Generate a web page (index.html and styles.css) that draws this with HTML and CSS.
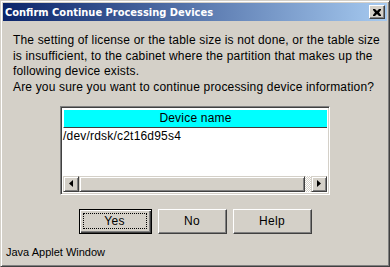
FILE: index.html
```html
<!DOCTYPE html>
<html>
<head>
<meta charset="utf-8">
<link rel="stylesheet" href="styles.css">
</head>
<body>
<div class="window">
  <div class="titlebar">
    <span class="title">Confirm Continue Processing Devices</span>
    <div class="close"><svg width="8" height="7" viewBox="0 0 8 7"><path d="M0 0h2l2 2 2-2h2v1l-2 2.5 2 2.5v1h-2l-2-2-2 2h-2v-1l2-2.5-2-2.5z" fill="#000"/></svg></div>
  </div>
  <div class="content">
    <p class="message">The setting of license or the table size is not done, or the table size<br>is insufficient, to the cabinet where the partition that makes up the<br>following device exists.<br>Are you sure you want to continue processing device information?</p>
    <div class="table">
      <div class="thead">Device name</div>
      <div class="tbody">
        <div class="row">/dev/rdsk/c2t16d95s4</div>
      </div>
      <div class="hscroll">
        <div class="sbtn"><svg width="4" height="7" viewBox="0 0 4 7"><path d="M4 0v7L0 3.5z" fill="#000"/></svg></div>
        <div class="thumb"></div>
        <div class="track"></div>
        <div class="sbtn"><svg width="4" height="7" viewBox="0 0 4 7"><path d="M0 0v7l4-3.5z" fill="#000"/></svg></div>
      </div>
    </div>
    <div class="buttons">
      <div class="btn default"><span class="focus">Yes</span></div>
      <div class="btn no">No</div>
      <div class="btn help">Help</div>
    </div>
  </div>
  <div class="status">Java Applet Window</div>
</div>
</body>
</html>
```
FILE: styles.css
```css
html, body {
  margin: 0;
  padding: 0;
  background: #d4d0c8;
}
body {
  width: 390px;
  height: 267px;
  overflow: hidden;
  font-family: "Liberation Sans", Arial, sans-serif;
  font-size: 12px;
  color: #000;
}
.window {
  box-sizing: border-box;
  width: 390px;
  height: 267px;
  border: 1px solid;
  border-color: #d4d0c8 #404040 #404040 #d4d0c8;
  box-shadow: inset 1px 1px 0 #fff, inset -1px -1px 0 #808080;
  padding: 2px;
  display: flex;
  flex-direction: column;
}
.titlebar {
  height: 18px;
  display: flex;
  align-items: center;
  justify-content: space-between;
  background: linear-gradient(to right, #0a246a, #a6caf0);
  padding: 0 2px 0 2px;
}
.title {
  color: #fff;
  font-weight: bold;
  font-size: 11px;
  font-family: "DejaVu Sans Condensed", "DejaVu Sans", Tahoma, sans-serif;
  font-stretch: condensed;
}
.close {
  box-sizing: border-box;
  width: 16px;
  height: 14px;
  background: #d4d0c8;
  border: 1px solid;
  border-color: #fff #404040 #404040 #fff;
  box-shadow: inset -1px -1px 0 #808080;
  display: flex;
  align-items: center;
  justify-content: center;
}
.content {
  flex: 1;
  display: flex;
  flex-direction: column;
}
.message {
  margin: 12px 0 0 10px;
  white-space: nowrap;
  line-height: 15.7px;
  letter-spacing: 0.17px;
}
.table {
  box-sizing: border-box;
  margin: 10px 0 0 57px;
  width: 270px;
  height: 89px;
  border: 1px solid;
  border-color: #808080 #fff #fff #808080;
  box-shadow: inset 1px 1px 0 #404040, inset -1px -1px 0 #d4d0c8;
  padding: 2px;
  background: #fff;
  display: flex;
  flex-direction: column;
}
.thead {
  box-sizing: border-box;
  height: 19px;
  background: #00ffff;
  border-top: 1px solid #fff;
  border-left: 1px solid #fff;
  border-bottom: 1px solid #404040;
  text-align: center;
  line-height: 17px;
  letter-spacing: 0.2px;
}
.tbody {
  flex: 1;
}
.row {
  line-height: 16px;
  letter-spacing: 0.2px;
}
.hscroll {
  height: 16px;
  display: flex;
  background: #d4d0c8;
}
.sbtn {
  box-sizing: border-box;
  width: 16px;
  height: 16px;
  background: #d4d0c8;
  border: 1px solid;
  border-color: #d4d0c8 #404040 #404040 #d4d0c8;
  box-shadow: inset 1px 1px 0 #fff, inset -1px -1px 0 #808080;
  display: flex;
  align-items: center;
  justify-content: center;
}
.thumb {
  box-sizing: border-box;
  flex: 1;
  border: 1px solid;
  border-color: #d4d0c8 #404040 #404040 #d4d0c8;
  box-shadow: inset 1px 1px 0 #fff, inset -1px -1px 0 #808080;
}
.track {
  width: 6px;
  background: repeating-conic-gradient(#fff 0 25%, #d4d0c8 0 50%) 0 0 / 2px 2px;
}
.buttons {
  display: flex;
  justify-content: center;
  gap: 6px;
  margin-top: 14px;
}
.btn {
  box-sizing: border-box;
  height: 25px;
  border: 1px solid;
  border-color: #fff #404040 #404040 #fff;
  box-shadow: inset -1px -1px 0 #808080;
  display: flex;
  align-items: center;
  justify-content: center;
  font-size: 12px;
  letter-spacing: 0.3px;
}
.btn.default {
  width: 73px;
  border-color: #000;
  box-shadow: inset 1px 1px 0 #fff, inset -1px -1px 0 #404040, inset -2px -2px 0 #808080;
  padding: 3px 4px 4px 3px;
}
.focus {
  box-sizing: border-box;
  flex: 1;
  align-self: stretch;
  border: 1px dotted #000;
  display: flex;
  align-items: center;
  justify-content: center;
}
.btn.no { width: 69px; }
.btn.help { width: 79px; }
.status {
  font-size: 11px;
  padding: 0 0 5px 3px;
  line-height: 14px;
}
```
